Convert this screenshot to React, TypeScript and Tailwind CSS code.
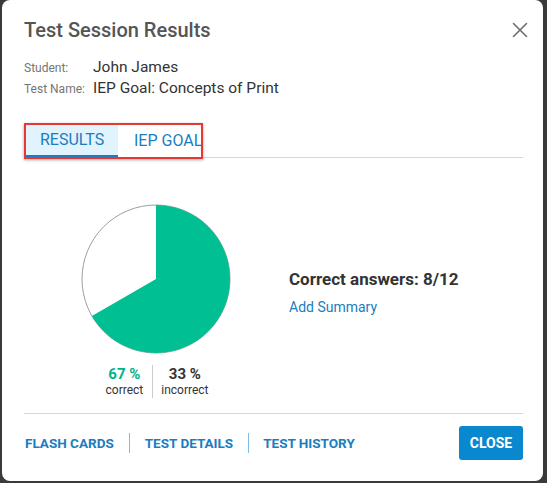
import { X } from "lucide-react";

function Pie() {
  const cx = 75;
  const cy = 75;
  const r = 74;
  const angle = (8 / 12) * Math.PI * 2;
  const ex = cx + r * Math.sin(angle);
  const ey = cy - r * Math.cos(angle);
  return (
    <svg width="150" height="150" viewBox="0 0 150 150">
      <circle cx={cx} cy={cy} r={r} fill="#ffffff" stroke="#9e9e9e" strokeWidth="1" />
      <path
        d={`M ${cx} ${cy} L ${cx} ${cy - r} A ${r} ${r} 0 1 1 ${ex} ${ey} Z`}
        fill="#00bf93"
      />
    </svg>
  );
}

function App() {
  return (
    <div
      className="w-[547px] h-[483px] bg-[#3a3a3a] flex"
      style={{ fontFamily: "Roboto, 'Liberation Sans', sans-serif" }}
    >
      <div className="ml-[2px] w-[541px] h-[481px] bg-white rounded-lg flex flex-col pl-[22px] pr-[20px]">
        <div className="pt-[18px] flex justify-between items-start">
          <h1 className="text-[20px] leading-[24px] font-medium text-[#555555]">
            Test Session Results
          </h1>
          <X className="w-[26px] h-[26px] text-[#707070] mt-[-1px] mr-[-10px]" strokeWidth={1.5} />
        </div>

        <div className="mt-[14px] flex flex-col">
          <div className="flex items-center h-[21px]">
            <span className="w-[69px] text-[12px] text-[#757575]">Student:</span>
            <span className="text-[15.5px] text-[#333333]">John James</span>
          </div>
          <div className="flex items-center h-[21px]">
            <span className="w-[69px] text-[12px] text-[#757575]">Test Name:</span>
            <span className="text-[15.5px] text-[#333333]">IEP Goal: Concepts of Print</span>
          </div>
        </div>

        <div className="mt-[24px] flex border-b border-[#d6d6d6]">
          <div className="flex border-2 border-[#e53935] -mb-[2px] shadow-[0_1px_3px_rgba(0,0,0,0.35)]">
            <div className="w-[92px] h-[32px] bg-[#e1f3fc] border-b-2 border-[#1a7dc0] flex items-center pl-[14px] text-[16px] text-[#1a7dc0]">
              RESULTS
            </div>
            <div className="w-[83px] h-[32px] flex items-center pl-[16px] overflow-hidden whitespace-nowrap text-[16px] text-[#1a7dc0]">
              IEP GOAL
            </div>
          </div>
        </div>

        <div className="flex mt-[46px]">
          <div className="w-[265px] flex flex-col items-center">
            <div className="ml-[-1px]">
              <Pie />
            </div>
            <div className="mt-[11px] flex">
              <div className="flex flex-col items-center px-[9px] text-[#333333]">
                <span className="text-[15px] leading-[18px] font-bold text-[#00b489]">67 %</span>
                <span className="text-[12px] leading-[15px]">correct</span>
              </div>
              <div className="w-px bg-[#cccccc]" />
              <div className="flex flex-col items-center px-[8px] text-[#333333]">
                <span className="text-[15px] leading-[18px] font-bold">33 %</span>
                <span className="text-[12px] leading-[15px]">incorrect</span>
              </div>
            </div>
          </div>
          <div className="flex flex-col pt-[63px]">
            <span className="text-[17px] leading-[24px] font-bold text-[#333333]">
              Correct answers: 8/12
            </span>
            <span className="mt-[6px] text-[14px] text-[#1a7dc0]">Add Summary</span>
          </div>
        </div>

        <div className="mt-[15px] border-t border-[#d6d6d6] flex items-center justify-between pt-[12px]">
          <div className="flex items-center text-[13.5px] font-bold text-[#1a7dc0]">
            <span className="pl-[1px] pr-[15px]">FLASH CARDS</span>
            <span className="w-px h-[20px] bg-[#7fbde3]" />
            <span className="px-[15px]">TEST DETAILS</span>
            <span className="w-px h-[20px] bg-[#7fbde3]" />
            <span className="pl-[14px]">TEST HISTORY</span>
          </div>
          <button className="w-[64px] h-[34px] bg-[#0a88cf] rounded-[3px] text-white text-[14px] font-bold">
            CLOSE
          </button>
        </div>
      </div>
    </div>
  );
}

export default App;
